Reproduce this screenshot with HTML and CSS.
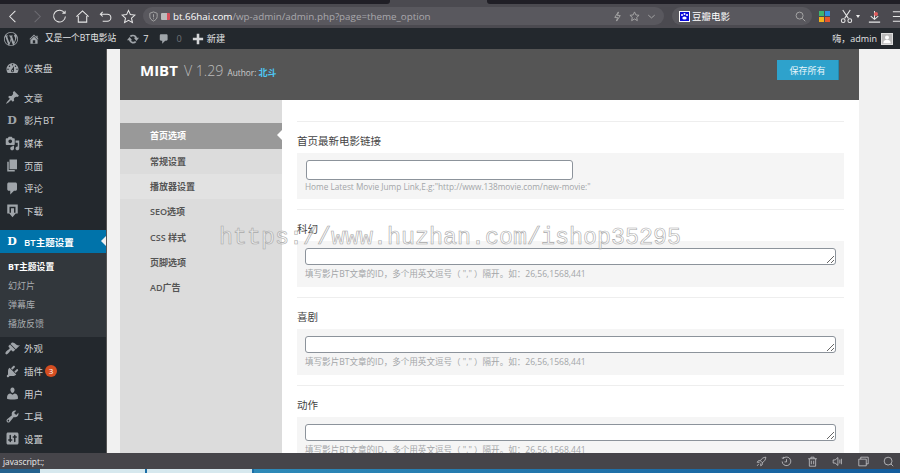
FILE: index.html
```html
<!DOCTYPE html>
<html lang="zh">
<head>
<meta charset="utf-8">
<title>MIBT 主题设置</title>
<link rel="stylesheet" href="styles.css">
</head>
<body>
<div class="page">
  <div class="tabstrip"><span class="tabs tabs-left"></span><span class="tab-active"></span><span class="tabs tabs-right"></span></div>
  <div class="toolbar">
    <div class="navicons">
      <svg class="ti" viewBox="0 0 16 16"><path d="M10 2 4 8l6 6" /></svg>
      <svg class="ti dim" viewBox="0 0 16 16"><path d="m6 2 6 6-6 6" /></svg>
      <svg class="ti" viewBox="0 0 16 16"><path d="M13.5 4.5A6.3 6.3 0 1 0 14.3 8M11 4.6h3V1.8" /></svg>
      <svg class="ti" viewBox="0 0 16 16"><path d="M1.5 8.2 8 2l6.500 6.200M3.500 7.500V14h9V7.500" /></svg>
      <svg class="ti" viewBox="0 0 16 16"><path d="M3 5.500h7a3.500 3.500 0 0 1 0 7.500H5M5 3 2.500 5.500 5 8" /></svg>
      <svg class="ti" viewBox="0 0 16 16"><path d="m8 1.500 2 4.500 4.800.5-3.600 3.200 1 4.800L8 12.100 3.800 14.500l1-4.800L1.200 6.500 6 6z" /></svg>
    </div>
    <div class="addr">
      <svg class="ai" viewBox="0 0 12 12"><path d="M6 1 2 2.500V6c0 2.500 2 4 4 5 2-1 4-2.500 4-5V2.500zM6 3.500v3.500M6 8v1" /></svg>
      <span class="lock"></span>
      <span class="host">bt.66hai.com</span><span class="path">/wp-admin/admin.php?page=theme_option</span>
      <span class="addr-right">
        <svg class="ai" viewBox="0 0 12 12"><path d="M7 1 3 7h3l-1 4 4-6H6z" /></svg>
        <svg class="ai" viewBox="0 0 12 12"><path d="m6 1 1.500 3.300 3.500.4-2.600 2.300.7 3.500L6 8.700l-3.100 1.800.7-3.500L1 4.700l3.500-.4z" /></svg>
        <svg class="ai" viewBox="0 0 12 12"><path d="m2.500 4.500 3.500 3 3.500-3" /></svg>
      </span>
    </div>
    <div class="search">
      <svg class="douban" viewBox="0 0 11 11"><rect width="11" height="11" fill="#fff"/><rect x="1" y="1" width="9" height="9" fill="#0a0ad8"/><circle cx="3" cy="4" r="1" fill="#fff"/><circle cx="5.500" cy="3" r="1" fill="#fff"/><circle cx="8" cy="4" r="1" fill="#fff"/><ellipse cx="5.500" cy="7" rx="2.200" ry="1.600" fill="#fff"/></svg>
      <span class="search-text">豆瓣电影</span>
      <svg class="ai search-go" viewBox="0 0 12 12"><circle cx="5" cy="5" r="3.800"/><path d="m8 8 3.200 3.200"/></svg>
    </div>
    <div class="tools">
      <svg class="grid" viewBox="0 0 11 11"><rect width="5" height="5" fill="#3cb371"/><rect x="6" width="5" height="5" fill="#2f8fe0"/><rect y="6" width="5" height="5" fill="#f2b21c"/><rect x="6" y="6" width="5" height="5" fill="#e8572c"/></svg>
      <svg class="ti cut" viewBox="0 0 16 16"><path d="m4 1 6 9M12 1 6 10"/><circle cx="4.500" cy="12.500" r="2"/><circle cx="11.500" cy="12.500" r="2"/></svg>
      <span class="caret"></span>
      <svg class="ti dl" viewBox="0 0 16 16"><path d="M8 2v9M4 7.500 8 11l4-3.500M2 14h12"/></svg>
      <span class="dot"></span>
      <svg class="ti menu" viewBox="0 0 16 16"><path d="M2 3h12M2 8h12M2 13h12"/></svg>
    </div>
  </div>

  <div class="adminbar">
    <svg class="wp" viewBox="0 0 20 20"><path d="M20 10c0-5.510-4.490-10-10-10C4.480 0 0 4.490 0 10c0 5.520 4.480 10 10 10 5.510 0 10-4.480 10-10zM7.780 15.370L4.370 6.220c.55-.02 1.170-.08 1.170-.08.5-.06.44-1.130-.06-1.110 0 0-1.450.11-2.370.11-.18 0-.37 0-.58-.01C4.120 2.690 6.870 1.110 10 1.110c2.330 0 4.450.87 6.050 2.340-.68-.11-1.650.39-1.650 1.580 0 .74.45 1.360.9 2.100.35.61.55 1.360.55 2.460 0 1.490-1.400 5-1.400 5l-3.030-8.370c.54-.02.82-.17.82-.17.5-.05.44-1.250-.06-1.220 0 0-1.440.12-2.380.12-.87 0-2.330-.12-2.330-.12-.5-.03-.56 1.200-.06 1.220l.92.08 1.260 3.410zM17.410 10c.24-.64.740-1.870.430-4.250.7 1.290 1.050 2.710 1.050 4.250 0 3.290-1.730 6.240-4.450 7.810.99-2.650 1.980-5.280 2.970-7.810zM6.100 18.090C3.120 16.650 1.110 13.530 1.110 10c0-1.300.23-2.480.72-3.590C3.250 10.300 4.670 14.200 6.100 18.090zm4.030-6.630l2.580 6.980c-.86.29-1.760.45-2.710.45-.79 0-1.570-.11-2.290-.33.81-2.380 1.620-4.740 2.420-7.100z"/></svg>
    <svg class="ab-ic ab-home" viewBox="0 0 20 20"><path d="M16 8.500l1.530 1.530-1.060 1.060L10 4.620l-6.470 6.470-1.060-1.060L10 2.500l4 4v-2h2v4zm-6-2.460l6 5.990V18H4v-5.970zM12 17v-5H8v5h4z"/></svg>
    <span class="ab-text ab-site">又是一个BT电影站</span>
    <svg class="ab-ic ab-upd" viewBox="0 0 14 14"><path d="M7 2a5 5 0 0 1 4.700 3.500H14l-3 3.700-3-3.700h1.500A2.700 2.700 0 0 0 4.800 4.800L3 3.500A5 5 0 0 1 7 2zM0 8.500l3-3.700 3 3.700H4.500A2.700 2.700 0 0 0 9.200 9.200L11 10.500A5 5 0 0 1 2.300 8.500z"/></svg>
    <span class="ab-text ab-count">7</span>
    <svg class="ab-ic ab-com" viewBox="0 0 20 20"><path d="M5 2h9c1.100 0 2 .9 2 2v7c0 1.100-.9 2-2 2h-2l-5 5v-5H5c-1.100 0-2-.9-2-2V4c0-1.100.9-2 2-2z"/></svg>
    <span class="ab-text ab-zero">0</span>
    <svg class="ab-ic ab-plus" viewBox="0 0 14 14"><path d="M5.500 1h3v4.500H13v3H8.500V13h-3V8.500H1v-3h4.500z"/></svg>
    <span class="ab-text">新建</span>
    <span class="ab-user">嗨，admin</span>
    <svg class="avatar" viewBox="0 0 12 12"><rect width="12" height="12" fill="#bbb"/><circle cx="6" cy="4.300" r="2.400" fill="#fff"/><path d="M1.500 11c.3-3 2-4 4.500-4s4.200 1 4.500 4z" fill="#fff"/></svg>
  </div>

  <div class="main">
    <nav class="side">
      <ul class="menu first">
        <li><svg class="mi" viewBox="0 0 20 20"><path d="M3.760 16h12.480c1.100-1.370 1.760-3.110 1.760-5 0-4.420-3.580-8-8-8s-8 3.580-8 8c0 1.890.66 3.630 1.760 5zM10 4c.55 0 1 .45 1 1s-.45 1-1 1-1-.45-1-1 .45-1 1-1zM6 6c.55 0 1 .45 1 1s-.45 1-1 1-1-.45-1-1 .45-1 1-1zm8 0c.55 0 1 .45 1 1s-.45 1-1 1-1-.45-1-1 .45-1 1-1zm-5.370 5.550L12 7v6c0 1.100-.9 2-2 2s-2-.9-2-2c0-.57.24-1.080.63-1.450zM4 10c.55 0 1 .45 1 1s-.45 1-1 1-1-.45-1-1 .45-1 1-1zm12 0c.55 0 1 .45 1 1s-.45 1-1 1-1-.45-1-1 .45-1 1-1zm-5 3c0-.55-.45-1-1-1s-1 .45-1 1 .45 1 1 1 1-.45 1-1z"/></svg>仪表盘</li>
      </ul>
      <ul class="menu second">
        <li><svg class="mi" viewBox="0 0 20 20"><path d="M10.440 3.020l1.820-1.820 6.360 6.350-1.830 1.820c-1.050-.68-2.480-.57-3.410.36l-.75.75c-.92.93-1.040 2.350-.35 3.410l-1.830 1.820-2.410-2.410-2.800 2.790c-.42.42-3.380 2.710-3.800 2.290s1.860-3.390 2.280-3.810l2.790-2.790L4.100 9.360l1.830-1.820c1.050.69 2.480.57 3.400-.36l.75-.75c.93-.92 1.050-2.350.36-3.410z"/></svg>文章</li>
        <li><span class="mi-d">D</span>影片BT</li>
        <li><svg class="mi" viewBox="0 0 20 20"><path d="M13 11V4c0-.55-.45-1-1-1h-1.670L9 1H5L3.670 3H2c-.55 0-1 .45-1 1v7c0 .55.45 1 1 1h10c.55 0 1-.45 1-1zM7 4.500c1.380 0 2.500 1.120 2.500 2.500S8.380 9.500 7 9.500 4.500 8.380 4.500 7 5.620 4.500 7 4.500zM14 6h5v10.500c0 1.380-1.120 2.500-2.500 2.500S14 17.880 14 16.500s1.120-2.500 2.500-2.500c.17 0 .34.020.5.050V9h-3V6zm-4 8.050V13h2v3.500c0 1.380-1.120 2.500-2.500 2.500S7 17.880 7 16.500 8.120 14 9.500 14c.17 0 .34.020.5.050z"/></svg>媒体</li>
        <li><svg class="mi" viewBox="0 0 20 20"><path d="M6 15V2h10v13H6zm-1 1h8v2H3V5h2v11z"/></svg>页面</li>
        <li><svg class="mi" viewBox="0 0 20 20"><path d="M5 2h9c1.100 0 2 .9 2 2v7c0 1.100-.9 2-2 2h-2l-5 5v-5H5c-1.100 0-2-.9-2-2V4c0-1.100.9-2 2-2z"/></svg>评论</li>
        <li><svg class="mi" viewBox="0 0 20 20"><path d="M3 2h14v12h-3V5H6v9H3zM8 7h4v6h3l-5 6-5-6h3z"/></svg>下载</li>
      </ul>
      <ul class="menu third">
        <li class="current"><span class="mi-d strong">D</span>BT主题设置</li>
      </ul>
      <ul class="submenu">
        <li class="sub-on">BT主题设置</li>
        <li>幻灯片</li>
        <li>弹幕库</li>
        <li>播放反馈</li>
      </ul>
      <ul class="menu">
        <li><svg class="mi" viewBox="0 0 20 20"><path d="M14.480 11.060L7.410 3.990l1.500-1.500c.5-.56 2.300-.47 3.510.32 1.210.8 1.430 1.280 2.910 2.100 1.180.64 2.450 1.260 4.670.88zm-.71.71L6.700 4.700 4.930 6.470c-.39.39-.39 1.020 0 1.410l1.060 1.060c.39.39.39 1.030 0 1.420-.6.600-1.430 1.110-2.210 1.690-.35.260-.7.530-1.010.84C1.430 13.730.5 15.620.5 16.370c0 .75.77 1.640 1.510 1.640.75 0 1.610-.91 2.950-2.250.3-.31.570-.66.840-1.010.58-.78 1.090-1.610 1.690-2.210.39-.39 1.030-.39 1.420 0l1.060 1.060c.39.39 1.020.39 1.410 0z"/></svg>外观</li>
        <li><svg class="mi" viewBox="0 0 20 20"><path d="M13.110 4.360L9.870 7.600 8 5.730l3.240-3.240c.35-.34 1.050-.2 1.560.32.52.51.66 1.210.31 1.550zm-8 1.770l.91-1.120 9.010 9.010-1.190.84c-.71.71-2.630 1.160-3.820 1.160H6.140L4.900 17.260c-.59.59-1.540.59-2.120 0-.59-.58-.59-1.530 0-2.120l1.240-1.240v-3.880c0-1.130.4-3.190 1.090-3.890zm7.260 3.970l3.240-3.240c.34-.35 1.040-.21 1.550.31.52.51.66 1.210.31 1.550l-3.240 3.250z"/></svg>插件<span class="badge">3</span></li>
        <li><svg class="mi" viewBox="0 0 20 20"><path d="M10 9.250c-2.270 0-2.730-3.440-2.730-3.440C7 4.020 7.820 2 9.970 2c2.160 0 2.980 2.020 2.710 3.810 0 0-.41 3.440-2.680 3.440zm0 2.570L12.720 10c2.390 0 4.520 2.330 4.520 4.530v2.490s-3.650 1.130-7.240 1.130c-3.650 0-7.240-1.130-7.240-1.130v-2.490c0-2.250 1.940-4.530 4.430-4.530z"/></svg>用户</li>
        <li><svg class="mi" viewBox="0 0 20 20"><path d="M16.680 9.770c-1.340 1.340-3.300 1.670-4.950.99l-5.410 6.520c-.99.99-2.590.99-3.570 0-.99-.98-.99-2.580 0-3.570l6.520-5.420c-.68-1.650-.35-3.610.99-4.950 1.280-1.280 3.120-1.620 4.720-1.060l-2.890 2.890 2.820 2.820 2.860-2.870c.53 1.580.18 3.420-1.090 4.670zM3.810 16.210c.4.390 1.040.39 1.430 0 .4-.4.4-1.040 0-1.430-.39-.4-1.030-.4-1.430 0-.39.39-.39 1.030 0 1.430z"/></svg>工具</li>
        <li><svg class="mi" viewBox="0 0 20 20"><path d="M18 16V4c0-1.100-.9-2-2-2H4c-1.100 0-2 .9-2 2v12c0 1.100.9 2 2 2h12c1.100 0 2-.9 2-2zM8 11h1c.55 0 1 .45 1 1s-.45 1-1 1H8v1c0 .55-.45 1-1 1s-1-.45-1-1v-1H5c-.55 0-1-.45-1-1s.45-1 1-1h1V6c0-.55.45-1 1-1s1 .45 1 1v5zm7-2h-1v5c0 .55-.45 1-1 1s-1-.45-1-1V9h-1c-.55 0-1-.45-1-1s.45-1 1-1h1V6c0-.55.45-1 1-1s1 .45 1 1v1h1c.55 0 1 .45 1 1s-.45 1-1 1z"/></svg>设置</li>
      </ul>
    </nav>

    <div class="canvas">
      <div class="panel">
        <header class="head">
          <div class="brand"><strong class="name">MIBT</strong><span class="ver">V 1.29</span><span class="author">Author: <b class="who">北斗</b></span></div>
          <button class="save">保存所有</button>
        </header>
        <div class="body">
          <ul class="tabsnav">
            <li class="on">首页选项</li>
            <li>常规设置</li>
            <li class="soft">播放器设置</li>
            <li>SEO选项</li>
            <li>CSS 样式</li>
            <li>页脚选项</li>
            <li>AD广告</li>
          </ul>
          <div class="opts">
            <section class="opt">
              <h3 class="lab">首页最新电影链接</h3>
              <div class="box">
                <input class="short" type="text">
                <p class="desc tight">Home Latest Movie Jump Link,E.g:"http://www.138movie.com/new-movie:"</p>
              </div>
            </section>
            <section class="opt">
              <h3 class="lab">科幻</h3>
              <div class="box"><textarea class="wide"></textarea><p class="desc">填写影片BT文章的ID，多个用英文逗号（ "," ）隔开。如：26,56,1568,441</p></div>
            </section>
            <section class="opt">
              <h3 class="lab">喜剧</h3>
              <div class="box"><textarea class="wide"></textarea><p class="desc">填写影片BT文章的ID，多个用英文逗号（ "," ）隔开。如：26,56,1568,441</p></div>
            </section>
            <section class="opt">
              <h3 class="lab">动作</h3>
              <div class="box"><textarea class="wide"></textarea><p class="desc">填写影片BT文章的ID，多个用英文逗号（ "," ）隔开。如：26,56,1568,441</p></div>
            </section>
          </div>
        </div>
      </div>
    </div>
    <div class="mark">https://www.huzhan.com/ishop35295</div>
  </div>

  <div class="status">
    <span class="status-text">javascript:;</span>
    <div class="status-icons">
      <svg class="si" viewBox="0 0 14 14"><path d="M12.500 1.500c-3 .2-5.300 1.600-7 4.500l2.500 2.500c2.900-1.700 4.300-4 4.500-7zM5.500 6H3L1.500 8h3M8 8.500V11l-2 1.500v-3M3.500 10 1.500 12.500"/></svg>
      <svg class="si" viewBox="0 0 14 14"><path d="M3 3a5.500 5.500 0 1 1-1.500 4M1 2.500 3 3l.500-2M7 4v3.500H4.500"/></svg>
      <svg class="si" viewBox="0 0 14 14"><path d="M1.500 3.500h11M5 3.500V1.500h4v2M3 3.500V13h8V3.500M5.500 6v4.500M8.500 6v4.500"/></svg>
      <svg class="si" viewBox="0 0 14 14"><path d="M1.500 5v4H4l3.500 3V2L4 5zM10 4.500v5M12 3.500v7"/></svg>
      <svg class="si" viewBox="0 0 14 14"><path d="M3.500 4V1.500H13V10h-2.500M1 4h9.500v8.500H1z"/></svg>
      <svg class="si" viewBox="0 0 14 14"><circle cx="6.500" cy="6.500" r="5"/><path d="m10 10 3 3"/></svg>
    </div>
  </div>
  <div class="taskbar"><span class="tb-start"></span><span class="tb-win"></span><span class="tb-win"></span><span class="tb-rest"></span></div>
</div>
</body>
</html>
```
FILE: styles.css
```css
* { box-sizing: border-box; }
html, body { margin: 0; padding: 0; }
body { width: 900px; height: 473px; overflow: hidden; font-family: "Open Sans", "Noto Sans CJK SC", sans-serif; }
ul { list-style: none; margin: 0; padding: 0; }
.page { width: 900px; height: 473px; display: flex; flex-direction: column; overflow: hidden; background: #f1f1f1; }

.tabstrip { height: 4px; display: flex; background: #4b4a50; flex: none; }
.tabs { background: #201f26; }
.tabs-left { width: 390px; border-bottom-right-radius: 3px; }
.tab-active { width: 97px; }
.tabs-right { flex: 1; border-bottom-left-radius: 3px; }

.toolbar { height: 24px; flex: none; background: #4b4a50; display: flex; align-items: center; padding-left: 6px; }
.navicons { width: 137px; flex: none; display: flex; gap: 8px; align-items: center; }
.ti { width: 15px; height: 15px; fill: none; stroke: #e8e8e8; stroke-width: 1.100; flex: none; }
.ti.dim { stroke: #6d6c72; }
.addr { width: 521px; flex: none; height: 18px; border-radius: 9px; background: #59585e; display: flex; align-items: center; padding: 0 7px 0 5px; font-size: 9.800px; }
.ai { width: 11px; height: 11px; fill: none; stroke: #aaa; stroke-width: 1; flex: none; }
.lock { width: 9px; height: 7px; margin: 0 3px 0 2px; background: #bbb; border-right: 3px solid #d8505c; border-radius: 1px; flex: none; }
.host { color: #fff; }
.path { color: #a9a8ad; }
.addr-right { margin-left: auto; display: flex; gap: 6px; }
.search { width: 140px; flex: none; height: 18px; border-radius: 9px; background: #59585e; margin-left: 8px; display: flex; align-items: center; padding: 0 6px 0 7px; }
.douban { width: 11px; height: 11px; flex: none; }
.search-text { color: #fff; font-size: 9.500px; margin-left: 2px; }
.search-go { margin-left: auto; }
.tools { flex: none; width: 88px; display: flex; align-items: center; padding-left: 7px; position: relative; }
.grid { width: 11px; height: 11px; flex: none; }
.cut { margin-left: 9px; }
.caret { width: 0; height: 0; border: 2px solid transparent; border-top: 3px solid #eee; margin: 3px 0 0 2px; flex: none; }
.dl { margin-left: 7px; }
.dot { position: absolute; left: 62px; top: 3px; width: 4px; height: 4px; border-radius: 50%; background: #e05a5a; }
.ti.menu { margin-left: 9px; }

.adminbar { height: 21px; flex: none; background: #23282d; display: flex; align-items: center; padding: 0 7px 0 4px; color: #e4e5e6; }
.wp { width: 14px; height: 14px; fill: #a0a5aa; flex: none; }
.ab-ic { width: 12px; height: 12px; fill: #a0a5aa; flex: none; }
.ab-text { font-size: 9.200px; line-height: 21px; }
.ab-home { margin-left: 10px; }
.ab-site { margin-left: 5px; font-size: 8.700px; }
.ab-upd { margin-left: 11px; }
.ab-count { margin-left: 4px; }
.ab-com { margin-left: 10px; }
.ab-zero { margin-left: 6px; color: #6f7378; }
.ab-plus { margin-left: 10px; margin-right: 3px; fill: #d5d6d8; }
.ab-user { margin-left: auto; font-size: 9px; line-height: 21px; }
.avatar { width: 12px; height: 12px; margin-left: 4px; border: 1px solid #ddd; flex: none; }

.main { height: 404px; flex: none; display: flex; position: relative; overflow: hidden; }
.side { width: 107px; flex: none; background: #23282d; border-right: 1px solid #555; padding-top: 8px; color: #d0d2d4; font-size: 9.500px; }
.menu li { height: 22.600px; display: flex; align-items: center; padding-left: 4.500px; white-space: nowrap; }
.second { margin-top: 7px; }
.third { margin-top: 8px; }
.mi { width: 15px; height: 15px; fill: #a0a5aa; margin-right: 4.500px; flex: none; }
.mi-d { width: 15px; margin-right: 4.500px; text-align: center; font: bold 11px "DejaVu Serif", serif; color: #a0a5aa; flex: none; }
.mi-d.strong { color: #fff; }
.menu .current { background: #0073aa; color: #fff; height: 23px; position: relative; font-weight: 600; }
.current::after { content: ""; position: absolute; right: 0; top: 6px; border: 5px solid transparent; border-right-color: #f1f1f1; border-left: 0; }
.submenu { background: #32373c; height: 84px; padding: 5px 0 0 8px; font-size: 9px; color: #a9acaf; }
.submenu li { height: 18.800px; line-height: 18.800px; }
.sub-on { color: #fff; font-weight: 700; font-size: 8.800px; }
.badge { width: 12px; height: 12px; margin-left: 2px; border-radius: 50%; background: #d54e21; color: #fff; font-size: 8px; line-height: 12px; text-align: center; }

.canvas { flex: 1; padding: 0 41px 0 13px; min-width: 0; }
.panel { background: #fff; height: 100%; display: flex; flex-direction: column; }
.head { height: 51px; flex: none; background: #555; display: flex; align-items: flex-start; justify-content: space-between; padding: 11px 20px 0 20px; }
.brand { display: flex; align-items: baseline; color: #ccc; line-height: 20px; }
.name { color: #fff; font-size: 15px; font-weight: 700; }
.ver { font-size: 14.200px; font-weight: 300; color: #bbb; margin-left: 6px; }
.author { font-size: 8.300px; margin-left: 4px; }
.who { color: #4dc8f5; font-weight: 700; font-size: 9px; }
.save { width: 62px; height: 20px; border: 0; border-right: 1px solid #2688ad; background: #2ea2cc; color: #e8f5fa; font: 9px "Open Sans", "Noto Sans CJK SC", sans-serif; padding: 0; }
.body { flex: 1; display: flex; min-height: 0; }
.tabsnav { width: 162px; flex: none; background: #dcdcdc; padding-top: 23px; font-size: 9px; font-weight: 600; color: #555; }
.tabsnav li { height: 25.300px; line-height: 25.300px; padding-left: 30px; position: relative; }
.tabsnav .on { background: #999; color: #fff; height: 25.700px; }
.tabsnav .on::after { content: ""; position: absolute; right: 0; top: 7px; border: 5px solid transparent; border-right-color: #fff; border-left: 0; }
.tabsnav .soft { background: #e2e2e2; }
.opts { flex: 1; padding: 21px 15px 0; min-width: 0; }
.opt { border-top: 1px solid #eee; height: 88px; padding-top: 11px; }
.lab { margin: 0 0 4px; font-size: 10.500px; line-height: 16px; font-weight: 400; color: #444; }
.box { background: #f5f5f5; height: 46px; padding: 7px 8px 0; }
.short { display: block; width: 267px; height: 20px; margin-left: 1px; padding: 0; background: #fff; border: 1px solid #8c939b; border-radius: 3px; }
.wide { display: block; width: 531px; height: 17px; padding: 0; background: #fff; border: 1px solid #8c939b; border-radius: 3px; resize: vertical; }
.desc { margin: 2px 0 0; font-size: 8.550px; line-height: 14px; color: #a3a5a8; white-space: nowrap; }
.desc.tight { margin-top: 0; font-size: 8.250px; }
.mark { position: absolute; left: 219px; top: 174px; font: 23.330px/30px "Liberation Mono", monospace; color: rgba(255,255,255,.35); -webkit-text-stroke: .6px #a8a8a8; white-space: nowrap; pointer-events: none; }

.status { height: 16px; flex: none; background: #46454a; display: flex; align-items: center; justify-content: space-between; padding: 0 6px 0 3px; }
.status-text { color: #eee; font-size: 8.300px; }
.status-icons { display: flex; gap: 14.500px; }
.si { width: 11px; height: 11px; fill: none; stroke: #c9c9cc; stroke-width: 1; }
.taskbar { height: 4px; flex: none; display: flex; background: #1c6fa8; }
.tb-start { width: 40px; background: #24628e; }
.tb-win { width: 105px; margin-right: 2px; background: #d6e8ee; }
.tb-rest { flex: 1; background: linear-gradient(90deg, #2e8ab8, #135c9c); }
```
